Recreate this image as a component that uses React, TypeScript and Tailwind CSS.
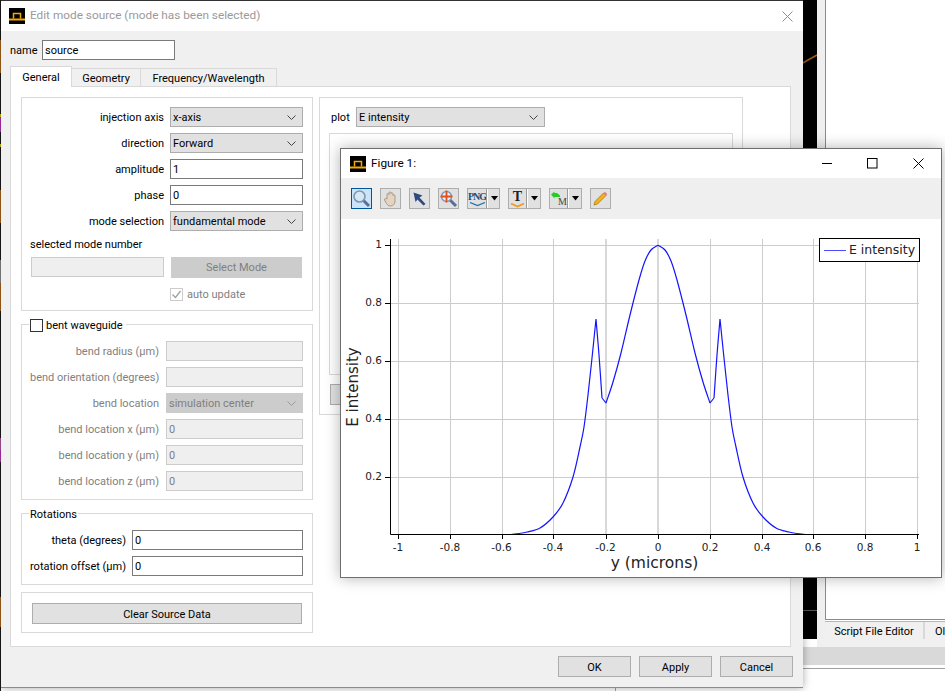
import React from "react";

const seg = (pts: [number, number][]) => {
  let d = "";
  for (let i = 0; i < pts.length - 1; i++) {
    const p0 = pts[Math.max(i - 1, 0)];
    const p1 = pts[i];
    const p2 = pts[i + 1];
    const p3 = pts[Math.min(i + 2, pts.length - 1)];
    const c1 = [p1[0] + (p2[0] - p0[0]) / 6, p1[1] + (p2[1] - p0[1]) / 6];
    const c2 = [p2[0] - (p3[0] - p1[0]) / 6, p2[1] - (p3[1] - p1[1]) / 6];
    d += `${i === 0 ? `M${p1[0]} ${p1[1]}` : ""}C${c1[0]} ${c1[1]} ${c2[0]} ${c2[1]} ${p2[0]} ${p2[1]}`;
  }
  return d;
};
const flank: [number, number][] = [[511, 534.5], [519, 533.5], [527, 532], [540, 528], [553, 517], [563, 503], [573, 477], [580, 447], [584, 427], [588, 395], [592, 358], [596, 319]];
const inner: [number, number][] = [[596, 319], [599, 355], [602, 398]];
const dip: [number, number][] = [[602, 398], [606, 403]];
const rise: [number, number][] = [[606, 403], [613, 382], [621, 353], [630, 315], [639, 280], [645, 261], [651, 250], [658, 245.2]];
const mirror = (pts: [number, number][]) => pts.map(([x, y]) => [1316 - x, y] as [number, number]);
const curvePath = [flank, inner, dip, rise, mirror(flank), mirror(inner), mirror(dip), mirror(rise)].map(seg).join("");

const xTicks: [number, string][] = [[398, "-1"], [450, "-0.8"], [501.5, "-0.6"], [553, "-0.4"], [605.5, "-0.2"], [658, "0"], [710, "0.2"], [762, "0.4"], [813, "0.6"], [865, "0.8"], [917, "1"]];
const yTicks: [number, string][] = [[245.5, "1"], [303.5, "0.8"], [361.5, "0.6"], [419.5, "0.4"], [477.5, "0.2"]];

function Logo() {
  return (
    <svg width="16" height="16" viewBox="0 0 16 16" className="shrink-0">
      <rect width="16" height="16" fill="#000" />
      <path d="M0 11.5H16" stroke="#f5a800" strokeWidth="2" />
      <path d="M4.5 10.5V5.5H11.5V10.5" stroke="#f5a800" strokeWidth="1.5" fill="none" />
    </svg>
  );
}

function Chevron({ muted }: { muted?: boolean }) {
  return (
    <svg width="9" height="5" viewBox="0 0 9 5" className="shrink-0">
      <path d="M0.5 0.5L4.5 4.5L8.5 0.5" fill="none" stroke={muted ? "#999" : "#444"} />
    </svg>
  );
}

function Select({ value, className, disabled }: { value: string; className: string; disabled?: boolean }) {
  return (
    <div className={`h-5 flex items-center justify-between pl-[2px] pr-[6px] border ${disabled ? "bg-[#cccccc] border-[#cccccc] text-[#7f7f7f]" : "bg-[#e1e1e1] border-[#adadad] text-black"} ${className}`}>
      <span className="pt-px">{value}</span>
      <Chevron muted={disabled} />
    </div>
  );
}

function Input({ value, className, disabled }: { value?: string; className: string; disabled?: boolean }) {
  return (
    <div className={`h-5 flex items-center pl-[2px] pt-px border ${disabled ? "bg-[#efefef] border-[#cccccc] text-[#7f7f7f]" : "bg-white border-[#7a7a7a] text-black"} ${className}`}>
      {value}
    </div>
  );
}

function Row({ label, children, muted, labelW }: { label: string; children: React.ReactNode; muted?: boolean; labelW: string }) {
  return (
    <div className="flex items-center h-5">
      <div className={`text-right whitespace-nowrap pt-px ${labelW} ${muted ? "text-[#7f7f7f]" : "text-black"}`}>{label}</div>
      {children}
    </div>
  );
}

function Btn({ label, className }: { label: string; className: string }) {
  return <div className={`flex items-center justify-center pt-px bg-[#e1e1e1] border border-[#adadad] text-black ${className}`}>{label}</div>;
}

function ToolBtn({ children, wide, active }: { children: React.ReactNode; wide?: boolean; active?: boolean }) {
  return (
    <div className={`h-[21px] flex items-center border ${wide ? "w-[33px]" : "w-[21px] justify-center"} ${active ? "bg-[#cce4f7] border-[#005499]" : "bg-[#e1e1e1] border-[#adadad]"}`}>
      {children}
    </div>
  );
}

function Split() {
  return (
    <div className="flex items-center h-full">
      <div className="w-px h-full bg-[#9a9a9a] border-r border-white box-content" />
      <svg width="10" height="5" viewBox="0 0 10 5" className="ml-[2px]"><path d="M1 0H8L4.5 4.5Z" fill="#000" /></svg>
    </div>
  );
}

function Magnifier() {
  return (
    <svg width="19" height="19" viewBox="0 0 19 19">
      <path d="M10 10L17 17" stroke="#5a6f94" strokeWidth="3" />
      <circle cx="7.5" cy="7.5" r="5.5" fill="#d5e6f5" stroke="#8296b0" strokeWidth="1.6" />
    </svg>
  );
}

export default function App() {
  return (
    <div className="relative w-[945px] h-[691px] overflow-hidden bg-white text-[11px] leading-none font-['Roboto',sans-serif]">
      {/* desktop behind */}
      <div className="absolute left-0 top-0 w-px h-[691px] bg-[#1a1a1a] flex flex-col">
        <div className="h-[40px]" />
        <div className="h-[33px] bg-[#a8641a]" />
        <div className="h-[41px]" />
        <div className="h-[3px] bg-[#c8c820]" />
        <div className="h-[15px] bg-[#b030b0]" />
        <div className="h-[12px]" />
        <div className="h-[3px] bg-[#c8c820]" />
        <div className="h-[43px]" />
        <div className="h-[33px] bg-[#a8641a]" />
        <div className="h-[37px]" />
        <div className="h-[23px] bg-[#888888]" />
        <div className="h-[28px] bg-[#a8641a]" />
        <div className="h-[127px]" />
        <div className="h-[12px] bg-[#b050a0]" />
        <div className="h-[12px] bg-[#b030b0]" />
        <div className="h-[135px]" />
        <div className="h-[30px] bg-[#a8641a]" />
      </div>
      <div className="absolute left-[803px] top-0 w-[14px] h-[639px] bg-black">
        <svg width="14" height="639" viewBox="0 0 14 639">
          <path d="M0 63L5 60L14 55" stroke="#9a5a10" strokeWidth="1.6" fill="none" />
          <path d="M0 610.5H14" stroke="#555" />
        </svg>
      </div>
      <div className="absolute left-[817px] top-0 w-[8px] h-[647px] bg-[#efefef]" />
      <div className="absolute left-[825px] top-0 w-[120px] h-[620px] bg-white border-l border-b border-[#8a8a8a]" />
      <div className="absolute left-[825px] top-[621px] w-[120px] h-[18px] border-t border-[#b5b5b5] flex bg-[#f0f0f0] whitespace-nowrap">
        <div className="w-[100px] h-[17px] shrink-0 flex items-center justify-center border-r-2 border-[#d9d9d9] pt-px">Script File Editor</div>
        <div className="flex items-center pl-[10px] pt-px">Ol</div>
      </div>
      <div className="absolute left-[817px] top-[639px] w-[128px] h-[8px] bg-[#f0f0f0]" />
      <div className="absolute left-[803px] top-[647px] w-[142px] h-[18px] bg-[#d9d9d9]" />
      <div className="absolute left-[803px] top-[668px] w-[142px] h-px bg-[#a0a0a0]" />
      <div className="absolute left-[615px] top-[688px] w-px h-[3px] bg-[#a0a0a0]" />

      {/* Dialog */}
      <div className="absolute left-px top-0 w-[802px] h-[688px] flex flex-col bg-[#f0f0f0] border-t border-t-[#333333] border-b border-b-[#8a8a8a] shadow-[0_0_8px_rgba(0,0,0,0.35)]">
        <div className="h-[30px] bg-white flex items-center pl-[8px] pr-[10px] shrink-0">
          <Logo />
          <span className="ml-[5px] text-[11.8px] text-[#9a9a9a]">Edit mode source (mode has been selected)</span>
          <svg width="11" height="11" viewBox="0 0 11 11" className="ml-auto"><path d="M0.5 0.5L10.5 10.5M10.5 0.5L0.5 10.5" stroke="#8c8c8c" /></svg>
        </div>
        <div className="flex-1 flex flex-col pl-[9px] pr-[12px] pt-[9px]">
          <div className="flex items-center h-5">
            <span className="w-[32px] pt-px">name</span>
            <Input value="source" className="w-[133px]" />
          </div>
          <div className="flex items-end mt-[6px] h-[21px] relative z-10">
            <div className="w-[62px] h-[21px] bg-white border border-b-0 border-[#d9d9d9] flex items-center justify-center">General</div>
            <div className="w-[69px] h-[19px] pt-px bg-[#f0f0f0] border border-l-0 border-[#d9d9d9] flex items-center justify-center">Geometry</div>
            <div className="w-[136px] h-[19px] pt-px bg-[#f0f0f0] border border-l-0 border-[#d9d9d9] flex items-center justify-center">Frequency/Wavelength</div>
          </div>
          <div className="h-[561px] -mt-px bg-white border border-[#d9d9d9] flex gap-[6px] pl-[10px] pt-[10px]">
            <div className="w-[292px] flex flex-col shrink-0">
              <div className="h-[214px] border border-[#d9d9d9] pt-[9px] pl-[8px]">
                <div className="flex flex-col gap-[6px]">
                  <Row label="injection axis" labelW="w-[134px]"><Select value="x-axis" className="ml-[6px] w-[133px]" /></Row>
                  <Row label="direction" labelW="w-[134px]"><Select value="Forward" className="ml-[6px] w-[133px]" /></Row>
                  <Row label="amplitude" labelW="w-[134px]"><Input value="1" className="ml-[6px] w-[133px]" /></Row>
                  <Row label="phase" labelW="w-[134px]"><Input value="0" className="ml-[6px] w-[133px]" /></Row>
                  <Row label="mode selection" labelW="w-[134px]"><Select value="fundamental mode" className="ml-[6px] w-[133px]" /></Row>
                </div>
                <div className="mt-[6px] h-[14px] flex items-center">selected mode number</div>
                <div className="flex mt-[6px] ml-px">
                  <Input disabled className="w-[133px] h-[20px]" />
                  <div className="ml-[7px] w-[131px] h-[21px] bg-[#cccccc] text-[#7f7f7f] flex items-center justify-center">Select Mode</div>
                </div>
                <div className="flex items-center mt-[10px] ml-[140px] text-[#7f7f7f]">
                  <div className="w-[13px] h-[13px] border border-[#cccccc] flex items-center justify-center">
                    <svg width="11" height="11" viewBox="0 0 11 11"><path d="M1.5 5.5L4.5 8.5L9.5 2" stroke="#a0a0a0" strokeWidth="1.3" fill="none" /></svg>
                  </div>
                  <span className="ml-[4px]">auto update</span>
                </div>
              </div>

              <div className="relative h-[176px] mt-[13px] border border-[#d9d9d9] pt-[16px] pl-[8px]">
                <div className="absolute left-[7px] -top-[7px] h-[14px] bg-white flex items-center px-px">
                  <div className="w-[13px] h-[13px] border border-[#333333] bg-white" />
                  <span className="ml-[3px] mr-[2px] text-black">bent waveguide</span>
                </div>
                <div className="flex flex-col gap-[6px]">
                  <Row muted label="bend radius (µm)" labelW="w-[129px]"><Input disabled className="ml-[7px] w-[137px]" /></Row>
                  <Row muted label="bend orientation (degrees)" labelW="w-[129px]"><Input disabled className="ml-[7px] w-[137px]" /></Row>
                  <Row muted label="bend location" labelW="w-[129px]"><Select disabled value="simulation center" className="ml-[7px] w-[137px]" /></Row>
                  <Row muted label="bend location x (µm)" labelW="w-[129px]"><Input disabled value="0" className="ml-[7px] w-[137px]" /></Row>
                  <Row muted label="bend location y (µm)" labelW="w-[129px]"><Input disabled value="0" className="ml-[7px] w-[137px]" /></Row>
                  <Row muted label="bend location z (µm)" labelW="w-[129px]"><Input disabled value="0" className="ml-[7px] w-[137px]" /></Row>
                </div>
              </div>

              <div className="relative h-[72px] mt-[13px] border border-[#d9d9d9] pt-[16px] pl-[8px]">
                <div className="absolute left-[7px] -top-[7px] h-[14px] bg-white flex items-center px-px">Rotations</div>
                <div className="flex flex-col gap-[6px]">
                  <Row label="theta (degrees)" labelW="w-[96px]"><Input value="0" className="ml-[6px] w-[171px]" /></Row>
                  <Row label="rotation offset (µm)" labelW="w-[96px]"><Input value="0" className="ml-[6px] w-[171px]" /></Row>
                </div>
              </div>

              <div className="h-[41px] mt-[7px] border border-[#d9d9d9] pt-[10px] pl-[10px]">
                <Btn label="Clear Source Data" className="w-[270px] h-[21px]" />
              </div>
            </div>

            <div className="w-[424px] h-[318px] border border-[#d9d9d9] pt-[9px] pl-[9px] pr-[9px] shrink-0">
              <div className="flex items-center h-5 pl-[2px]">
                <span className="w-[25px] pt-px">plot</span>
                <Select value="E intensity" className="w-[189px]" />
              </div>
              <div className="h-[242px] mt-[6px] border border-[#d9d9d9]" />
              <Btn label="" className="w-[100px] h-[21px] mt-[9px] ml-px" />
            </div>
          </div>
          <div className="flex justify-end gap-[8px] mt-[9px] -mr-[2px]">
            <Btn label="OK" className="w-[73px] h-[21px]" />
            <Btn label="Apply" className="w-[73px] h-[21px]" />
            <Btn label="Cancel" className="w-[73px] h-[21px]" />
          </div>
        </div>
      </div>

      {/* Figure */}
      <div className="absolute left-[340px] top-[148px] w-[602px] h-[430px] flex flex-col bg-white border border-[#6e6e6e] shadow-[0_0_14px_rgba(0,0,0,0.3)]">
        <div className="h-[29px] flex items-center pl-[9px] pr-[17px] shrink-0">
          <Logo />
          <span className="ml-[5px] text-[11.8px] text-black">Figure 1:</span>
          <svg width="11" height="11" viewBox="0 0 11 11" className="ml-auto"><path d="M0 5.5H10" stroke="#000" /></svg>
          <svg width="11" height="11" viewBox="0 0 11 11" className="ml-[34px]"><rect x="0.5" y="0.5" width="9.5" height="9.5" fill="none" stroke="#000" /></svg>
          <svg width="11" height="11" viewBox="0 0 11 11" className="ml-[35px]"><path d="M0.5 0.5L10.5 10.5M10.5 0.5L0.5 10.5" stroke="#000" /></svg>
        </div>
        <div className="h-[41px] bg-[#efefef] flex items-center gap-[8px] pl-[10px] shrink-0">
          <ToolBtn active><Magnifier /></ToolBtn>
          <ToolBtn>
            <svg width="17" height="18" viewBox="0 0 17 18">
              <path d="M5 9V4.5C5 3 7 3 7 4.5V3C7 1.5 9 1.5 9 3V3.5C9 2.5 11 2.5 11 4V5.5C11 4.5 13 4.5 13 6V11C13 14 11 16 8.5 16C6.5 16 5.5 15 4.5 13.5L2.5 10C2 8.5 4 8 5 9Z" fill="#e6d4c0" stroke="#a89a8a" />
            </svg>
          </ToolBtn>
          <ToolBtn>
            <svg width="17" height="17" viewBox="0 0 17 17"><path d="M2.5 2.5L11.5 5.5L8.5 7.5L14.5 14L12.5 15.5L6.5 9.5L4.5 12Z" fill="#2f4a80" /></svg>
          </ToolBtn>
          <ToolBtn>
            <svg width="19" height="19" viewBox="0 0 19 19">
              <path d="M10 10L17 17" stroke="#5a6f94" strokeWidth="3" />
              <circle cx="7.5" cy="7.5" r="5" fill="#e9eef5" stroke="#8296b0" strokeWidth="1.4" />
              <path d="M7.5 1.5V13.5M1.5 7.5H13.5" stroke="#e2501c" strokeWidth="1.8" />
            </svg>
          </ToolBtn>
          <ToolBtn wide>
            <div className="w-[19px] flex flex-col items-center">
              <span className="text-[10px] leading-[11px] tracking-[-1px] font-bold text-[#1c4d7a] font-['Liberation_Serif',serif]">PNG</span>
              <svg width="17" height="5" viewBox="0 0 17 5"><path d="M1 0.5L8.5 3.5L16 0.5" stroke="#1c6fa8" fill="none" strokeWidth="1.2" /></svg>
            </div>
            <Split />
          </ToolBtn>
          <ToolBtn wide>
            <div className="w-[19px] flex flex-col items-center">
              <span className="text-[14px] leading-[13px] font-bold text-[#222222] font-['Liberation_Serif',serif]">T</span>
              <svg width="15" height="5" viewBox="0 0 15 5"><path d="M1 0.5L7.5 3.5L14 0.5" stroke="#f09a20" fill="none" strokeWidth="1.6" /></svg>
            </div>
            <Split />
          </ToolBtn>
          <ToolBtn wide>
            <div className="relative w-[19px] h-[19px]">
              <svg width="10" height="8" viewBox="0 0 10 8" className="absolute left-px top-[2px]"><path d="M0 3.5L3.5 0.5V2H6L9 4.5V6H3.5V7.5Z" fill="#22d022" /></svg>
              <span className="absolute left-[8px] top-[8px] text-[10px] leading-[10px] text-[#444444] font-['Liberation_Serif',serif]">M</span>
            </div>
            <Split />
          </ToolBtn>
          <ToolBtn>
            <svg width="17" height="17" viewBox="0 0 17 17">
              <path d="M3 11.5L11.5 3L14 5.5L5.5 14L2 15Z" fill="#f2b21c" stroke="#a87a10" strokeWidth="0.8" />
              <path d="M11.5 3L12.8 1.7L15.3 4.2L14 5.5Z" fill="#e07a8a" />
            </svg>
          </ToolBtn>
        </div>
        <svg width="600" height="358" viewBox="341 219 600 358" className="block font-['DejaVu_Sans',sans-serif]">
          {xTicks.map(([x]) => (
            <path key={x} d={`M${x === 658 || x === 605.5 ? Math.round(x) : Math.round(x) + 0.5} 239V534`} stroke={x === 658 || x === 605.5 ? "#d8d8d8" : "#cccccc"} strokeWidth={x === 658 || x === 605.5 ? 2 : 1} />
          ))}
          {yTicks.map(([y]) => (
            <path key={y} d={`M391 ${y}H919`} stroke="#cccccc" />
          ))}
          <path d={curvePath} fill="none" stroke="#1414ff" strokeWidth="1.2" />
          <path d="M390.5 239V534.5H919" fill="none" stroke="#000" />
          {xTicks.map(([x, t]) => (
            <g key={t}>
              <path d={`M${Math.round(x) + 0.5} 534.5V539`} stroke="#000" />
              <text x={x} y="551" textAnchor="middle" fontSize="10.5" fill="#222">{t}</text>
            </g>
          ))}
          {yTicks.map(([y, t]) => (
            <g key={t}>
              <path d={`M385 ${y}H390.5`} stroke="#000" />
              <text x="382" y={y + 2} textAnchor="end" fontSize="10.5" fill="#222">{t}</text>
            </g>
          ))}
          <text x="654.5" y="568" textAnchor="middle" fontSize="15.5" fill="#222">y (microns)</text>
          <text x="358" y="387" textAnchor="middle" fontSize="15" fill="#222" transform="rotate(-90 358 387)">E intensity</text>
          <rect x="819.5" y="238.5" width="100" height="23" fill="#fff" stroke="#000" />
          <path d="M824 250.5H846" stroke="#4a4aff" />
          <text x="849" y="254" fontSize="12.5" fill="#222">E intensity</text>
        </svg>
      </div>
    </div>
  );
}
